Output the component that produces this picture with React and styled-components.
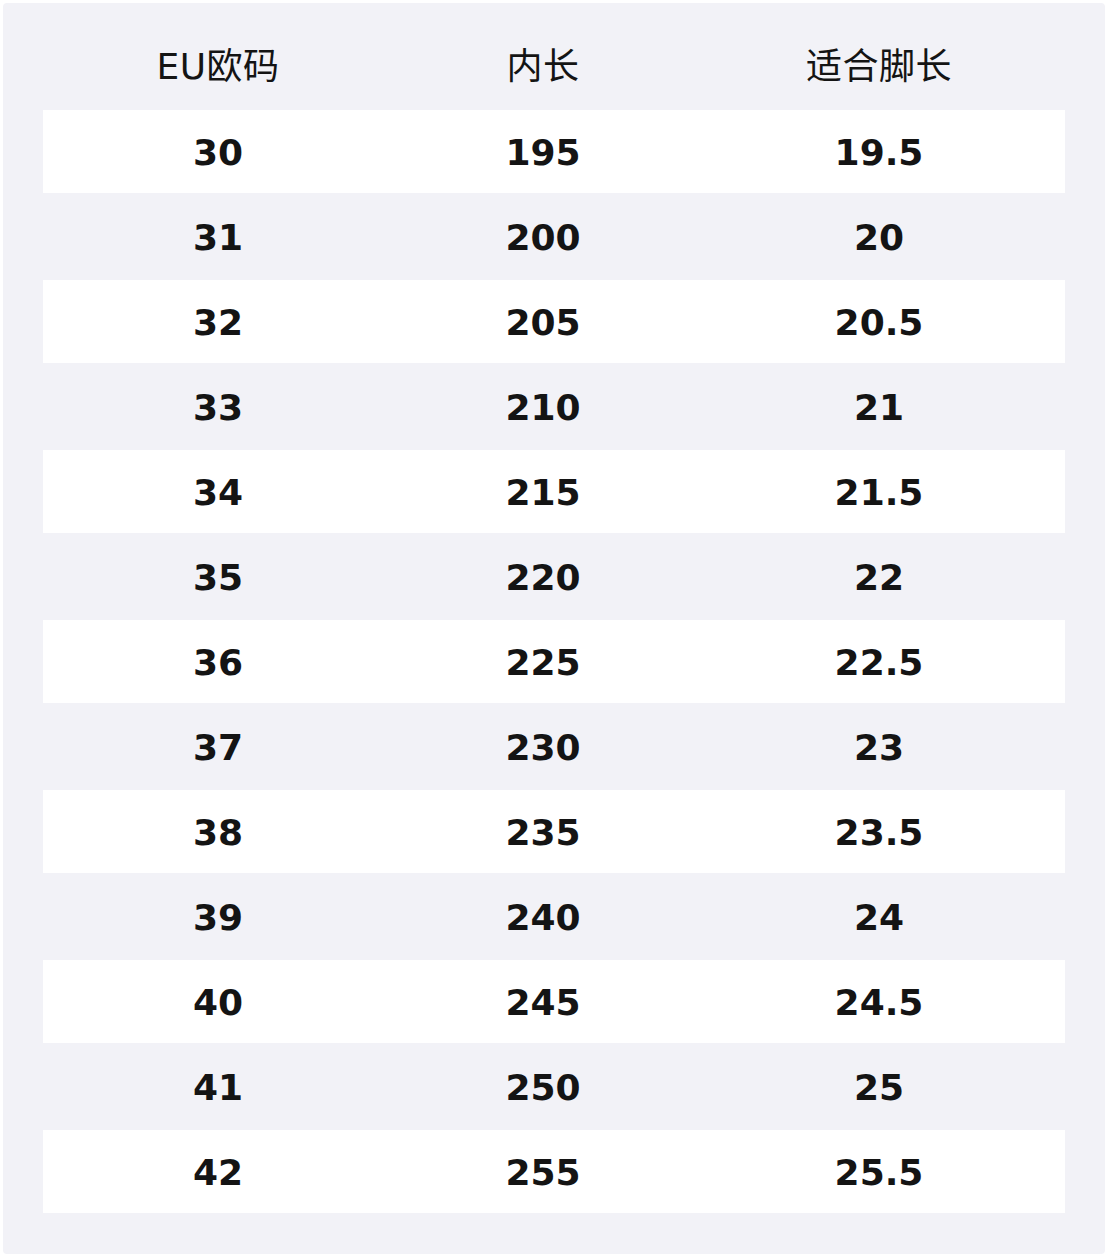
import React from "react";
import styled, { createGlobalStyle } from "styled-components";

const GlobalStyle = createGlobalStyle`
  body {
    margin: 3px;
    background: #ffffff;
    font-family: "DejaVu Sans", "Noto Sans CJK SC", sans-serif;
    color: #141414;
  }
`;

const Panel = styled.div`
  background: #f2f2f7;
  border-radius: 4px;
  padding: 40px 40px 41px;
`;

const cols = "350px 300px 372px";

const HeadRow = styled.div`
  display: grid;
  grid-template-columns: ${cols};
  height: 48px;
  align-items: center;
  margin-bottom: 19px;
`;

const HeadCell = styled.div`
  text-align: center;
  font-size: 36px;
  font-weight: 400;
  line-height: 48px;
  letter-spacing: 0.5px;
`;

const Body = styled.div`
  display: flex;
  flex-direction: column;
  gap: 2px;
`;

const Row = styled.div`
  display: grid;
  grid-template-columns: ${cols};
  height: 83px;
  align-items: center;
  background: ${({ $striped }) => ($striped ? "#ffffff" : "transparent")};
`;

const Cell = styled.div`
  text-align: center;
  font-size: 36px;
  font-weight: 700;
  line-height: 1;
  padding-top: 2px;
`;

const sizes = [
  ["30", "195", "19.5"],
  ["31", "200", "20"],
  ["32", "205", "20.5"],
  ["33", "210", "21"],
  ["34", "215", "21.5"],
  ["35", "220", "22"],
  ["36", "225", "22.5"],
  ["37", "230", "23"],
  ["38", "235", "23.5"],
  ["39", "240", "24"],
  ["40", "245", "24.5"],
  ["41", "250", "25"],
  ["42", "255", "25.5"],
];

const App = () => (
  <>
    <GlobalStyle />
    <Panel>
      <HeadRow>
        <HeadCell>EU欧码</HeadCell>
        <HeadCell>内长</HeadCell>
        <HeadCell>适合脚长</HeadCell>
      </HeadRow>
      <Body>
        {sizes.map((row, i) => (
          <Row key={row[0]} $striped={i % 2 === 0}>
            {row.map((v, j) => (
              <Cell key={j}>{v}</Cell>
            ))}
          </Row>
        ))}
      </Body>
    </Panel>
  </>
);

export default App;
